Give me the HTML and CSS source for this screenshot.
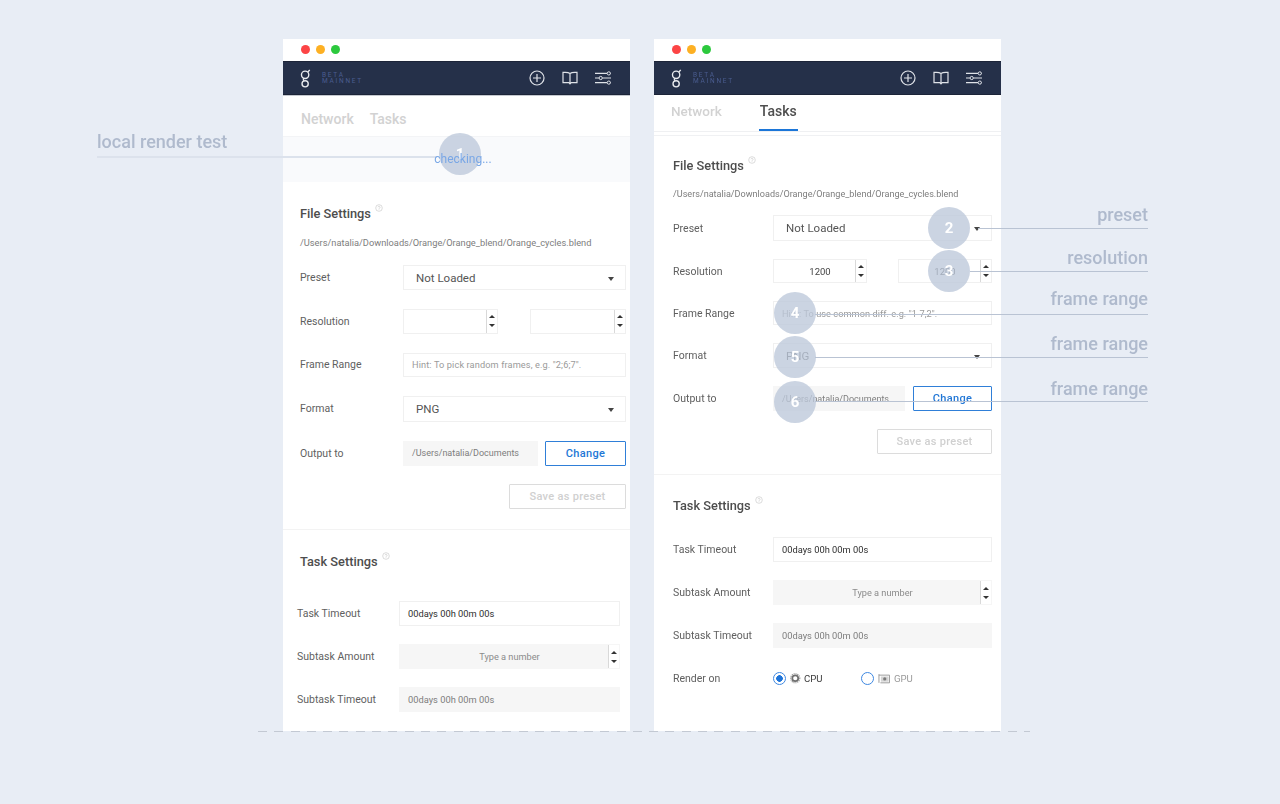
FILE: index.html
```html
<!DOCTYPE html>
<html lang="en">
<head>
<meta charset="utf-8">
<title>Task settings</title>
<link rel="stylesheet" href="styles.css">
</head>
<body>
<svg class="defs" width="0" height="0" aria-hidden="true">
  <symbol id="logo" viewBox="0 0 12 20">
    <circle cx="5.6" cy="6" r="4" fill="none" stroke="currentColor" stroke-width="1.5"/>
    <circle cx="5.6" cy="15.8" r="3.4" fill="none" stroke="currentColor" stroke-width="1.5"/>
    <path d="M8.4 3.2 L10.6 .6 M4 9.8 C3.4 10.6 3.6 11.6 4.4 12.6" fill="none" stroke="currentColor" stroke-width="1.5"/>
  </symbol>
  <symbol id="plus" viewBox="0 0 16 16">
    <circle cx="8" cy="8" r="7" fill="none" stroke="currentColor" stroke-width="1.2"/>
    <path d="M8 4v8M4 8h8" fill="none" stroke="currentColor" stroke-width="1.2"/>
  </symbol>
  <symbol id="book" viewBox="0 0 16 14">
    <path d="M8 2.4C6.6 1.4 3 1.2 1 1.4V11.6H6.8L8 12.8 9.2 11.6H15V1.4C13 1.2 9.4 1.4 8 2.4ZM8 2.4V11.8" fill="none" stroke="currentColor" stroke-width="1.2"/>
  </symbol>
  <symbol id="sliders" viewBox="0 0 16 14">
    <path d="M0 2.4H12M15.6 2.4H16M0 7H4M7.4 7H16M0 11.6H12M15.6 11.6H16" fill="none" stroke="currentColor" stroke-width="1.1"/>
    <circle cx="13.8" cy="2.4" r="1.6" fill="none" stroke="currentColor" stroke-width="1"/>
    <circle cx="5.7" cy="7" r="1.6" fill="none" stroke="currentColor" stroke-width="1"/>
    <circle cx="13.8" cy="11.6" r="1.6" fill="none" stroke="currentColor" stroke-width="1"/>
  </symbol>
  <symbol id="help" viewBox="0 0 8 8">
    <circle cx="4" cy="4" r="3.3" fill="none" stroke="currentColor" stroke-width=".6"/>
    <path d="M2.9 3.2C3 2.2 5.1 2.2 5.1 3.3 5.1 4 4 4 4 4.9M4 5.4V6" fill="none" stroke="currentColor" stroke-width=".6"/>
  </symbol>
</svg>

<main class="stage">
  <section class="window win-a">
    <div class="titlebar"><i class="dot red"></i><i class="dot amber"></i><i class="dot green"></i></div>
    <header class="appbar">
      <svg class="logo"><use href="#logo"/></svg>
      <div class="brand"><span>BETA</span><span>MAINNET</span></div>
      <nav class="tools">
        <svg class="tool-plus"><use href="#plus"/></svg>
        <svg class="tool-book"><use href="#book"/></svg>
        <svg class="tool-sliders"><use href="#sliders"/></svg>
      </nav>
    </header>
    <div class="tabs">
      <span class="tab">Network</span>
      <span class="tab">Tasks</span>
    </div>
    <div class="status"><span class="checking">checking...</span></div>
    <div class="file">
      <h2 class="heading">File Settings <svg class="help"><use href="#help"/></svg></h2>
      <p class="path">/Users/natalia/Downloads/Orange/Orange_blend/Orange_cycles.blend</p>
      <div class="rows">
        <div class="row"><label>Preset</label><div class="box select">Not Loaded<i class="caret"></i></div></div>
        <div class="row"><label>Resolution</label><div class="pair">
          <div class="box spin"><span class="val"></span><span class="arrows"><i class="up"></i><i class="down"></i></span></div>
          <div class="box spin"><span class="val"></span><span class="arrows"><i class="up"></i><i class="down"></i></span></div>
        </div></div>
        <div class="row"><label>Frame Range</label><div class="box hint">Hint: To pick random frames, e.g. "2;6;7".</div></div>
        <div class="row"><label>Format</label><div class="box select">PNG<i class="caret"></i></div></div>
        <div class="row"><label>Output to</label><div class="output"><div class="box filled small path-value">/Users/natalia/Documents</div><button class="btn primary">Change</button></div></div>
        <div class="row end"><button class="btn ghost">Save as preset</button></div>
      </div>
    </div>
    <div class="task">
      <h2 class="heading">Task Settings <svg class="help"><use href="#help"/></svg></h2>
      <div class="rows">
        <div class="row"><label>Task Timeout</label><div class="box small dark">00days 00h 00m 00s</div></div>
        <div class="row"><label>Subtask Amount</label><div class="box filled spin"><span class="val ph">Type a number</span><span class="arrows"><i class="up"></i><i class="down"></i></span></div></div>
        <div class="row"><label>Subtask Timeout</label><div class="box filled small">00days 00h 00m 00s</div></div>
      </div>
    </div>
  </section>

  <section class="window win-b">
    <div class="titlebar"><i class="dot red"></i><i class="dot amber"></i><i class="dot green"></i></div>
    <header class="appbar">
      <svg class="logo"><use href="#logo"/></svg>
      <div class="brand"><span>BETA</span><span>MAINNET</span></div>
      <nav class="tools">
        <svg class="tool-plus"><use href="#plus"/></svg>
        <svg class="tool-book"><use href="#book"/></svg>
        <svg class="tool-sliders"><use href="#sliders"/></svg>
      </nav>
    </header>
    <div class="tabs">
      <span class="tab">Network</span>
      <span class="tab active">Tasks</span>
    </div>
    <div class="file">
      <h2 class="heading">File Settings <svg class="help"><use href="#help"/></svg></h2>
      <p class="path">/Users/natalia/Downloads/Orange/Orange_blend/Orange_cycles.blend</p>
      <div class="rows">
        <div class="row"><label>Preset</label><div class="box select">Not Loaded<i class="caret"></i></div></div>
        <div class="row"><label>Resolution</label><div class="pair">
          <div class="box spin"><span class="val strong">1200</span><span class="arrows"><i class="up"></i><i class="down"></i></span></div>
          <div class="box spin"><span class="val strong">1200</span><span class="arrows"><i class="up"></i><i class="down"></i></span></div>
        </div></div>
        <div class="row"><label>Frame Range</label><div class="box hint">Hint: To use common diff. e.g. "1-7,2".</div></div>
        <div class="row"><label>Format</label><div class="box select">PNG<i class="caret"></i></div></div>
        <div class="row"><label>Output to</label><div class="output"><div class="box filled small path-value">/Users/natalia/Documents</div><button class="btn primary">Change</button></div></div>
        <div class="row end"><button class="btn ghost">Save as preset</button></div>
      </div>
    </div>
    <div class="task">
      <h2 class="heading">Task Settings <svg class="help"><use href="#help"/></svg></h2>
      <div class="rows">
        <div class="row"><label>Task Timeout</label><div class="box small dark">00days 00h 00m 00s</div></div>
        <div class="row"><label>Subtask Amount</label><div class="box filled spin"><span class="val ph">Type a number</span><span class="arrows"><i class="up"></i><i class="down"></i></span></div></div>
        <div class="row"><label>Subtask Timeout</label><div class="box filled small">00days 00h 00m 00s</div></div>
        <div class="row"><label>Render on</label>
          <div class="radios">
            <span class="radio on"></span>
            <svg class="chip" viewBox="0 0 12 12"><circle cx="6" cy="6" r="3.4" fill="none" stroke="#6f6f6f" stroke-width="2"/><circle cx="6" cy="6" r="5.2" fill="none" stroke="#8a8a8a" stroke-width="1.2" stroke-dasharray="1.2 1"/></svg>
            <span class="opt">CPU</span>
            <span class="radio second"></span>
            <svg class="gpu" viewBox="0 0 13 11"><path d="M1 1V10M1 2H12V10H2.5" fill="none" stroke="#9a9a9a" stroke-width="1"/><rect x="3" y="3.4" width="8" height="5.4" fill="#d4d4d4"/><circle cx="7" cy="6" r="1.7" fill="#7a7a7a"/></svg>
            <span class="opt off">GPU</span>
          </div>
        </div>
      </div>
    </div>
  </section>

  <div class="dash"></div>

  <div class="note-label left-label">local render test</div>
  <div class="line l1"></div>
  <div class="marker m1">1</div>

  <div class="note-label r1">preset</div>
  <div class="note-label r2">resolution</div>
  <div class="note-label r3">frame range</div>
  <div class="note-label r4">frame range</div>
  <div class="note-label r5">frame range</div>

  <div class="marker m2">2</div>
  <div class="marker m3">3</div>
  <div class="marker m4">4</div>
  <div class="marker m5">5</div>
  <div class="marker m6">6</div>

  <div class="line l2"></div>
  <div class="line l3"></div>
  <div class="line l4"></div>
  <div class="line l5"></div>
  <div class="line l6"></div>
</main>
</body>
</html>
```

FILE: styles.css
```css
* { box-sizing: border-box; }
html, body { margin: 0; height: 100%; }
body { background: #e8edf5; font-family: Roboto, "Liberation Sans", sans-serif; overflow: hidden; }
.defs { position: absolute; }

.stage { position: relative; display: flex; gap: 24px; width: 1280px; height: 804px; padding: 39px 0 0 283px; align-items: flex-start; filter: blur(.3px); }

.window { width: 347px; height: 692px; background: #fff; overflow: hidden; flex: none; }

.titlebar { height: 22px; display: flex; align-items: center; gap: 6px; padding: 0 0 2px 18px; }
.dot { width: 9px; height: 9px; border-radius: 50%; }
.red { background: #fc4445; }
.amber { background: #fdb023; }
.green { background: #2cc93d; }

.appbar { height: 34px; background: #253049; display: flex; align-items: center; color: #e4e7ec; padding: 0 19px 0 17px; border-top: 1px solid #1c2438; border-bottom: 1px solid #1c2438; }
.win-a .appbar { box-shadow: 0 1px 0 #c5c9d0; }
.logo { width: 11px; height: 19px; color: #e8eaee; }
.brand { display: flex; flex-direction: column; margin-left: 11px; font-size: 6.5px; line-height: 6.3px; letter-spacing: 1.75px; color: #4a5c8f; }
.tools { margin-left: auto; display: flex; align-items: center; gap: 17px; }
.tools svg { display: block; color: #dfe2e8; }
.tool-plus { width: 16px; height: 16px; }
.tool-book { width: 16px; height: 14px; }
.tool-sliders { width: 16px; height: 14px; }

.tabs { display: flex; padding-left: 18px; font-size: 14px; font-weight: 500; color: #d2d2d2; }
.win-a .tabs { height: 42px; gap: 16px; align-items: center; border-bottom: 1px solid #f3f4f6; padding-top: 7px; }
.win-b .tabs { height: 37px; gap: 37px; padding-left: 17px; margin-bottom: 3px; border-bottom: 1px solid #eff0f2; box-shadow: 0 3px 0 #fff, 0 4px 0 #f0f1f3; align-items: flex-start; padding-top: 8px; }
.win-b .tab { font-size: 13.5px; }
.win-b .tab.active { font-size: 14px; color: #4f4f4f; border-bottom: 2px solid #1c76d8; height: 28px; padding: 0 1px; }

.status { height: 45px; background: #f9fafc; text-align: center; font-size: 12px; color: #79a7e6; padding: 14px 0 0 13px; line-height: 16px; }

.heading { margin: 0; font-size: 12.8px; font-weight: 500; color: #4d4d4d; line-height: 16px; }
.help { width: 8px; height: 8px; color: #c4c4c4; vertical-align: 6px; margin-left: 1px; }
.path { margin: 0; font-size: 9.27px; color: #7d7d7d; line-height: 12px; white-space: nowrap; }

.rows { display: grid; }
.row { display: flex; align-items: stretch; min-width: 0; }
.row label { flex: none; font-size: 10.5px; color: #5f5f5f; align-self: center; }
.row.end { justify-content: flex-end; }

.box { flex: 1; min-width: 0; display: flex; align-items: center; border: 1px solid #f0f0f0; background: #fff; font-size: 9.3px; color: #7d7d7d; white-space: nowrap; }
.select { font-size: 11.5px; color: #555; padding: 0 11px 0 12px; justify-content: space-between; }
.caret { width: 0; height: 0; border-left: 3.5px solid transparent; border-right: 3.5px solid transparent; border-top: 4px solid #444; margin-top: 2px; }
.hint { padding-left: 8px; color: #9a9a9a; font-size: 9.2px; }
.win-a .hint { letter-spacing: .12px; }
.win-b .hint { letter-spacing: .05px; }
.small { padding-left: 8px; }
.path-value { font-size: 9px; overflow: hidden; }
.dark { color: #2e2e2e; }
.filled { background: #f6f6f6; border-color: #f6f6f6; }

.pair { flex: 1; display: flex; justify-content: space-between; min-width: 0; }
.pair .spin { flex: none; }
.spin { padding: 0; }
.val { flex: 1; text-align: center; padding-left: 11px; font-size: 9.5px; }
.val.strong { color: #444; }
.val.ph { color: #8b8b8b; font-size: 9.2px; }
.arrows { flex: none; width: 11px; align-self: stretch; background: #fff; border-left: 1px solid #d9d9d9; display: flex; flex-direction: column; align-items: center; justify-content: center; gap: 6px; }
.up, .down { width: 0; height: 0; border-left: 3px solid transparent; border-right: 3px solid transparent; }
.up { border-bottom: 3.5px solid #333; }
.down { border-top: 3.5px solid #333; }

.output { flex: 1; display: flex; gap: 7px; min-width: 0; }
.btn { font-family: inherit; font-weight: 500; background: #fff; padding: 0; border-radius: 1px; font-size: 11px; letter-spacing: .3px; }
.primary { flex: none; border: 1px solid #2f7fd8; color: #2277d6; width: 81px; }
.ghost { border: 1px solid #dcdcdc; color: #d0d0d0; width: 117px; }

/* Window A metrics */
.win-a .file { padding: 22px 4px 0 17px; height: 348px; border-bottom: 1px solid #f3f3f3; }
.win-a .path { margin-top: 15px; }
.win-a .file .rows { margin-top: 16px; grid-template-rows: 25px 25px 24.5px 26px 25px 25px; row-gap: 18.8px; }
.win-a .file label { width: 103px; }
.win-a .pair .spin { width: 95px; }
.win-a .pair .spin + .spin { width: 96px; }
.win-a .task { padding: 22px 10px 0 14px; }
.win-a .task .heading { margin-left: 3px; }
.win-a .task .rows { margin-top: 31px; grid-template-rows: 25px 25px 25px; row-gap: 18px; }
.win-a .task label { width: 102px; }

/* Window B metrics */
.win-b .file { padding: 21px 9px 0 19px; height: 340px; border-bottom: 1px solid #f3f3f3; }
.win-b .path { margin-top: 14px; font-size: 9.08px; }
.win-b .file .rows { margin-top: 15px; grid-template-rows: 26px 24px 24px 25px 25px 25px; row-gap: 18px; }
.win-b .file label { width: 100px; }
.win-b .pair .spin { width: 94px; }
.win-b .output { gap: 8px; }
.win-b .primary { width: 79px; }
.win-b .ghost { width: 115px; }
.win-b .task { padding: 21px 9px 0 19px; }
.win-b .task .rows { margin-top: 23px; grid-template-rows: 25px 25px 25px 24px; row-gap: 18px; }
.win-b .task label { width: 100px; }

.radios { flex: 1; display: flex; align-items: center; font-size: 9.6px; color: #3a3a3a; padding-top: 1px; }
.radio { width: 13px; height: 13px; border-radius: 50%; border: 1px solid #3d87e0; background: #fff; flex: none; }
.radio.on { background: radial-gradient(circle, #1f74d8 0 3px, #fff 3.6px); }
.radio.second { margin-left: 38px; }
.chip { width: 10.5px; height: 10.5px; margin: 0 3.5px 0 4px; }
.gpu { width: 12.5px; height: 11px; margin: 0 4px 0 4px; }
.opt.off { color: #9a9a9a; }

/* Annotation overlay */
.dash { position: absolute; left: 258px; top: 731px; width: 772px; height: 1px; background: repeating-linear-gradient(90deg, #c3c9d3 0 9px, transparent 9px 16.3px); }
.note-label { position: absolute; font-size: 18px; line-height: 22px; font-weight: 500; color: #afbacd; white-space: nowrap; }
.left-label { left: 97px; top: 131px; }
.r1, .r2, .r3, .r4, .r5 { right: 132px; }
.r1 { top: 204px; }
.r2 { top: 247px; }
.r3 { top: 288px; }
.r4 { top: 333px; }
.r5 { top: 378px; }

.line { position: absolute; height: 1px; background: #b9c3d3; }
.l1 { left: 97px; top: 156px; width: 340px; height: 1.5px; background: #dce2ec; }
.l2 { left: 978px; top: 228px; width: 170px; }
.l3 { left: 970px; top: 271px; width: 178px; }
.l4 { left: 815px; top: 314px; width: 333px; }
.l5 { left: 815px; top: 357px; width: 333px; }
.l6 { left: 815px; top: 401px; width: 333px; }

.marker { position: absolute; width: 42px; height: 42px; border-radius: 50%; background: rgba(188, 200, 218, .78); color: #fff; font-size: 15px; font-weight: 700; display: flex; align-items: center; justify-content: center; }
.m1 { left: 439px; top: 133px; }
.m2 { left: 928px; top: 207px; }
.m3 { left: 928px; top: 250px; }
.m4 { left: 774px; top: 292px; }
.m5 { left: 774px; top: 336px; }
.m6 { left: 774px; top: 381px; }
.checking { position: relative; z-index: 3; }
```
